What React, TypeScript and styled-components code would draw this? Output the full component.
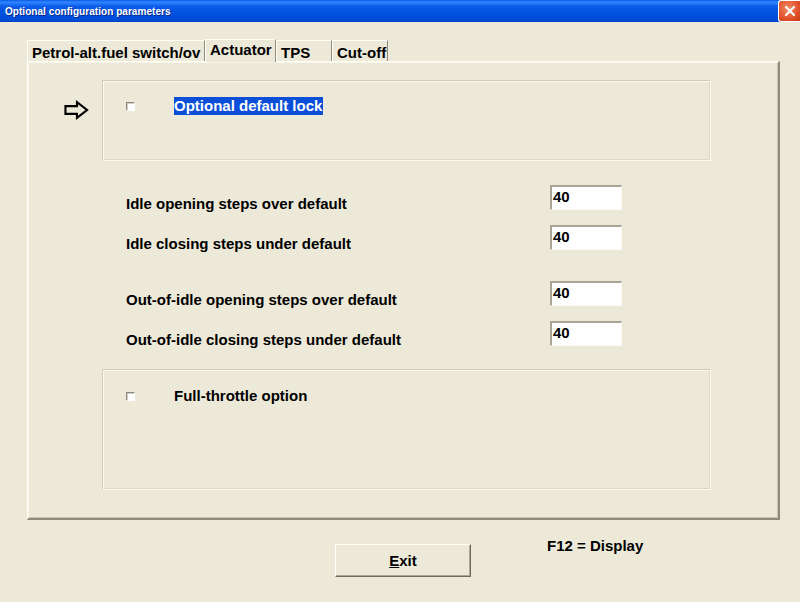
import React from "react";
import styled, { createGlobalStyle } from "styled-components";

const Global = createGlobalStyle`
  html, body { margin: 0; padding: 0; background: #ECE9D8; }
  body { width: 800px; height: 602px; overflow: hidden; font-family: "Liberation Sans", Arial, sans-serif; }
`;

const Window = styled.div`
  width: 800px;
  height: 602px;
  display: flex;
  flex-direction: column;
  background: #ECE9D8;
  overflow: hidden;
`;

const TitleBar = styled.div`
  height: 22px;
  flex: none;
  display: flex;
  align-items: center;
  justify-content: space-between;
  background: linear-gradient(#0a5ce6 0%, #2f86ff 10%, #0b5ae8 30%, #0052e0 60%, #004cd8 90%, #0040c0 100%);
  padding-left: 5px;
`;

const Title = styled.span`
  color: #fff;
  font-size: 10px;
  font-weight: bold;
  letter-spacing: 0.05px;
  text-shadow: 1px 1px 0 #0a2a8a;
`;

const CloseBtn = styled.div`
  width: 22px;
  height: 20px;
  margin-right: -1px;
  border-radius: 3px 0 0 3px;
  border: 1px solid #fff;
  border-right: none;
  background: radial-gradient(circle at 40% 35%, #f08a62, #e0502a 60%, #c23a14);
  display: flex;
  align-items: center;
  justify-content: center;
`;

const Content = styled.div`
  padding: 18px 0 0 27px;
  display: flex;
  flex-direction: column;
`;

const TabStrip = styled.div`
  display: flex;
  height: 21px;
  align-items: flex-end;
`;

const Tab = styled.div<{ $w: number; $active?: boolean }>`
  width: ${(p) => p.$w}px;
  box-sizing: border-box;
  height: ${(p) => (p.$active ? 23 : 21)}px;
  margin-bottom: ${(p) => (p.$active ? -1 : 0)}px;
  position: relative;
  z-index: ${(p) => (p.$active ? 2 : 1)};
  padding: ${(p) => (p.$active ? "1px 0 0 4px" : "3px 0 0 4px")};
  font-size: 15px;
  font-weight: bold;
  color: #000;
  line-height: 17px;
  background: #ECE9D8;
  border-left: 1px solid #fffff8;
  border-top: 1px solid #fffff8;
  border-right: 1px solid #8e8b7c;
  white-space: nowrap;
  overflow: hidden;
`;

const Panel = styled.div`
  width: 753px;
  height: 459px;
  box-sizing: border-box;
  border-top: 1px solid #fffff8;
  border-left: 1px solid #fffff8;
  border-right: 2px solid #8e8b7c;
  border-bottom: 2px solid #8e8b7c;
  box-shadow: inset 1px 1px 0 #f7f5ea, inset -1px -1px 0 #c9c5b2;
  padding-top: 18px;
  display: flex;
  flex-direction: column;
`;

const ArrowRow = styled.div`
  display: flex;
  align-items: flex-start;
  padding-left: 36px;
  gap: 13px;
`;

const ArrowIcon = styled.svg`
  margin-top: 20px;
  flex: none;
`;

const GroupBox = styled.div<{ $h: number; $ml?: number; $mt?: number }>`
  width: 609px;
  height: ${(p) => p.$h}px;
  box-sizing: border-box;
  margin-left: ${(p) => p.$ml ?? 0}px;
  margin-top: ${(p) => p.$mt ?? 0}px;
  border-top: 1px solid #cfcbb7;
  border-left: 1px solid #cfcbb7;
  border-right: 1px solid #fcfaf0;
  border-bottom: 1px solid #fcfaf0;
  box-shadow: inset 1px 1px 0 #fcfaf0, inset -1px -1px 0 #dcd8c6;
`;

const CheckRow = styled.div<{ $top: number }>`
  display: flex;
  align-items: center;
  padding: ${(p) => p.$top}px 0 0 23px;
`;

const CheckBox = styled.div`
  width: 9px;
  height: 9px;
  box-sizing: border-box;
  background: #fff;
  border-top: 1px solid #8a887d;
  border-left: 1px solid #8a887d;
  border-right: 1px solid #fff;
  border-bottom: 1px solid #fff;
  box-shadow: inset 1px 1px 0 #d4d0c8;
  flex: none;
`;

const CheckLabel = styled.span<{ $selected?: boolean }>`
  margin-left: 39px;
  font-size: 15px;
  font-weight: bold;
  line-height: 18px;
  padding: 0 1px 0 0;
  color: ${(p) => (p.$selected ? "#fff" : "#000")};
  background: ${(p) => (p.$selected ? "#0b4fd8" : "transparent")};
`;

const Fields = styled.div`
  margin-top: 24px;
  padding-left: 98px;
  display: flex;
  flex-direction: column;
  gap: 31px;
`;

const FieldGroup = styled.div`
  display: grid;
  grid-template-columns: 424px 72px;
  row-gap: 15px;
`;

const FieldLabel = styled.label`
  align-self: end;
  font-size: 15px;
  font-weight: bold;
  line-height: 16px;
  margin-bottom: -2px;
  color: #000;
`;

const NumInput = styled.div`
  height: 25px;
  box-sizing: border-box;
  background: #fff;
  border-top: 2px solid #a7a596;
  border-left: 2px solid #a7a596;
  border-right: 1px solid #fcfbf5;
  border-bottom: 1px solid #fcfbf5;
  padding: 2px 0 0 1px;
  font-size: 15px;
  font-weight: bold;
  line-height: 16px;
  color: #000;
`;

const Bottom = styled.div`
  display: flex;
  align-items: flex-start;
  padding: 24px 0 0 308px;
`;

const ExitButton = styled.button`
  width: 136px;
  height: 33px;
  box-sizing: border-box;
  background: #ECE9D8;
  border-top: 1px solid #fffff8;
  border-left: 1px solid #fffff8;
  border-right: 1px solid #6f6d62;
  border-bottom: 1px solid #6f6d62;
  box-shadow: inset -1px -1px 0 #aca899;
  font-family: "Liberation Sans", Arial, sans-serif;
  font-size: 15px;
  font-weight: bold;
  color: #000;
  padding: 0;
  u { text-decoration: underline; }
`;

const Hint = styled.div`
  margin-left: 76px;
  margin-top: -7px;
  font-size: 15px;
  font-weight: bold;
  line-height: 17px;
  color: #000;
`;

const tabs = [
  { label: "Petrol-alt.fuel switch/ov", w: 178 },
  { label: "Actuator", w: 71, active: true },
  { label: "TPS", w: 56 },
  { label: "Cut-off", w: 56 },
];

const groups = [
  [
    "Idle opening steps over default",
    "Idle closing steps under default",
  ],
  [
    "Out-of-idle opening steps over default",
    "Out-of-idle closing steps under default",
  ],
];

export default function App() {
  return (
    <>
      <Global />
      <Window>
        <TitleBar>
          <Title>Optional configuration parameters</Title>
          <CloseBtn>
            <svg width="12" height="12" viewBox="0 0 12 12">
              <path d="M2 2 L10 10 M10 2 L2 10" stroke="#fff" strokeWidth="2.2" strokeLinecap="round" />
            </svg>
          </CloseBtn>
        </TitleBar>
        <Content>
          <TabStrip>
            {tabs.map((t) => (
              <Tab key={t.label} $w={t.w} $active={t.active}>
                {t.label}
              </Tab>
            ))}
          </TabStrip>
          <Panel>
            <ArrowRow>
              <ArrowIcon width="25" height="20" viewBox="0 0 26 20">
                <path
                  d="M1.5 6 H13.5 V1.8 L24 10 L13.5 18.2 V14 H1.5 Z"
                  fill="none"
                  stroke="#000"
                  strokeWidth="2.2"
                  strokeLinejoin="miter"
                />
              </ArrowIcon>
              <GroupBox $h={81}>
                <CheckRow $top={16}>
                  <CheckBox />
                  <CheckLabel $selected>Optional default lock</CheckLabel>
                </CheckRow>
              </GroupBox>
            </ArrowRow>
            <Fields>
              {groups.map((g, i) => (
                <FieldGroup key={i}>
                  {g.map((label) => (
                    <React.Fragment key={label}>
                      <FieldLabel>{label}</FieldLabel>
                      <NumInput>40</NumInput>
                    </React.Fragment>
                  ))}
                </FieldGroup>
              ))}
            </Fields>
            <GroupBox $h={121} $ml={74} $mt={23}>
              <CheckRow $top={17}>
                <CheckBox />
                <CheckLabel>Full-throttle option</CheckLabel>
              </CheckRow>
            </GroupBox>
          </Panel>
          <Bottom>
            <ExitButton>
              <u>E</u>xit
            </ExitButton>
            <Hint>F12 = Display</Hint>
          </Bottom>
        </Content>
      </Window>
    </>
  );
}
